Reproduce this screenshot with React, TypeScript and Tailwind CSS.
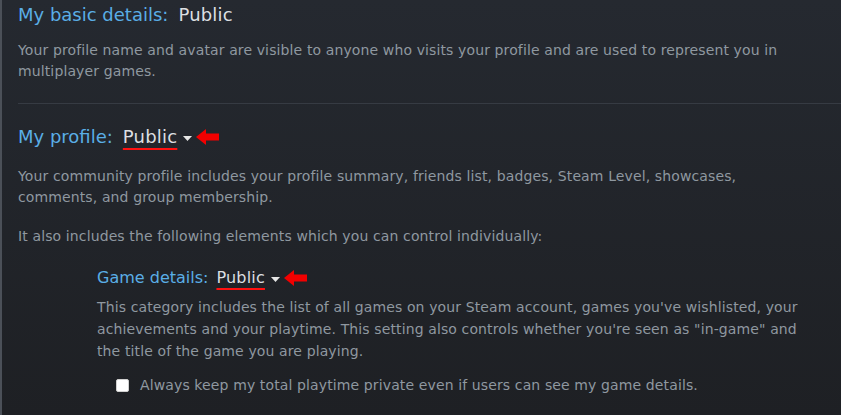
import type { ReactNode } from 'react'

function RedArrow() {
  return (
    <svg width="24" height="16" viewBox="0 0 24 16" className="ml-[4px] shrink-0">
      <path d="M0 8 L10 0 L10 4.5 L23 4.5 L23 11.5 L10 11.5 L10 16 Z" fill="#f20000" />
    </svg>
  )
}

function Caret() {
  return (
    <svg width="9" height="6" viewBox="0 0 9 6" className="ml-[6px] mt-[4px] shrink-0">
      <path d="M0 0 L9 0 L4.5 5 Z" fill="#e6e6e6" />
    </svg>
  )
}

function PrivacyValue({ label, underlined }: { label: string; underlined?: boolean }) {
  return (
    <span
      className={`tracking-[0.2px] text-[#dcdfe2] ${underlined ? 'underline decoration-[#ff1111] decoration-2 underline-offset-[5px]' : ''}`}
    >
      {label}
    </span>
  )
}

function Description({ children, className = '' }: { children: ReactNode; className?: string }) {
  return <p className={`text-[14px] leading-[21px] tracking-[0.12px] text-[#8f98a0] ${className}`}>{children}</p>
}

export default function App() {
  return (
    <div
      className="h-[415px] w-[841px] overflow-hidden border-l-2 border-[#4b5058] bg-gradient-to-b from-[#252930] to-[#1e2024] pl-[16px] pr-[38px]"
      style={{ fontFamily: '"DejaVu Sans", Verdana, sans-serif' }}
    >
      <h2 className="flex items-center text-[18px] leading-[30px] text-[#5aaee6]">
        My basic details:
        <span className="ml-[10px]">
          <PrivacyValue label="Public" />
        </span>
      </h2>
      <Description className="mt-[10px]">
        Your profile name and avatar are visible to anyone who visits your profile and are used to represent you in
        multiplayer games.
      </Description>

      <div className="mr-[-38px] mt-[21px] h-px bg-[#363b43]" />

      <h2 className="mt-[18px] flex items-center text-[18px] leading-[30px] text-[#5aaee6]">
        My profile:
        <span className="ml-[10px] flex items-center">
          <PrivacyValue label="Public" underlined />
          <Caret />
          <RedArrow />
        </span>
      </h2>
      <Description className="mt-[14px]">
        Your community profile includes your profile summary, friends list, badges, Steam Level, showcases, comments,
        and group membership.
      </Description>
      <Description className="mt-[18px]">
        It also includes the following elements which you can control individually:
      </Description>

      <div className="pl-[79px]">
        <h3 className="mt-[18px] flex items-center text-[16px] leading-[26px] text-[#5aaee6]">
          Game details:
          <span className="ml-[8px] flex items-center">
            <PrivacyValue label="Public" underlined />
            <Caret />
            <RedArrow />
          </span>
        </h3>
        <Description className="mt-[5px] leading-[22px]">
          This category includes the list of all games on your Steam account, games you've wishlisted, your
          achievements and your playtime. This setting also controls whether you're seen as "in-game" and the title of
          the game you are playing.
        </Description>
        <label className="mt-[12px] flex items-center pl-[19px] text-[14px] leading-[22px] tracking-[0.12px] text-[#8f98a0]">
          <span className="h-[13px] w-[13px] shrink-0 rounded-[2px] border border-[#d0d0d0] bg-white" />
          <span className="ml-[11px]">Always keep my total playtime private even if users can see my game details.</span>
        </label>
      </div>
    </div>
  )
}
